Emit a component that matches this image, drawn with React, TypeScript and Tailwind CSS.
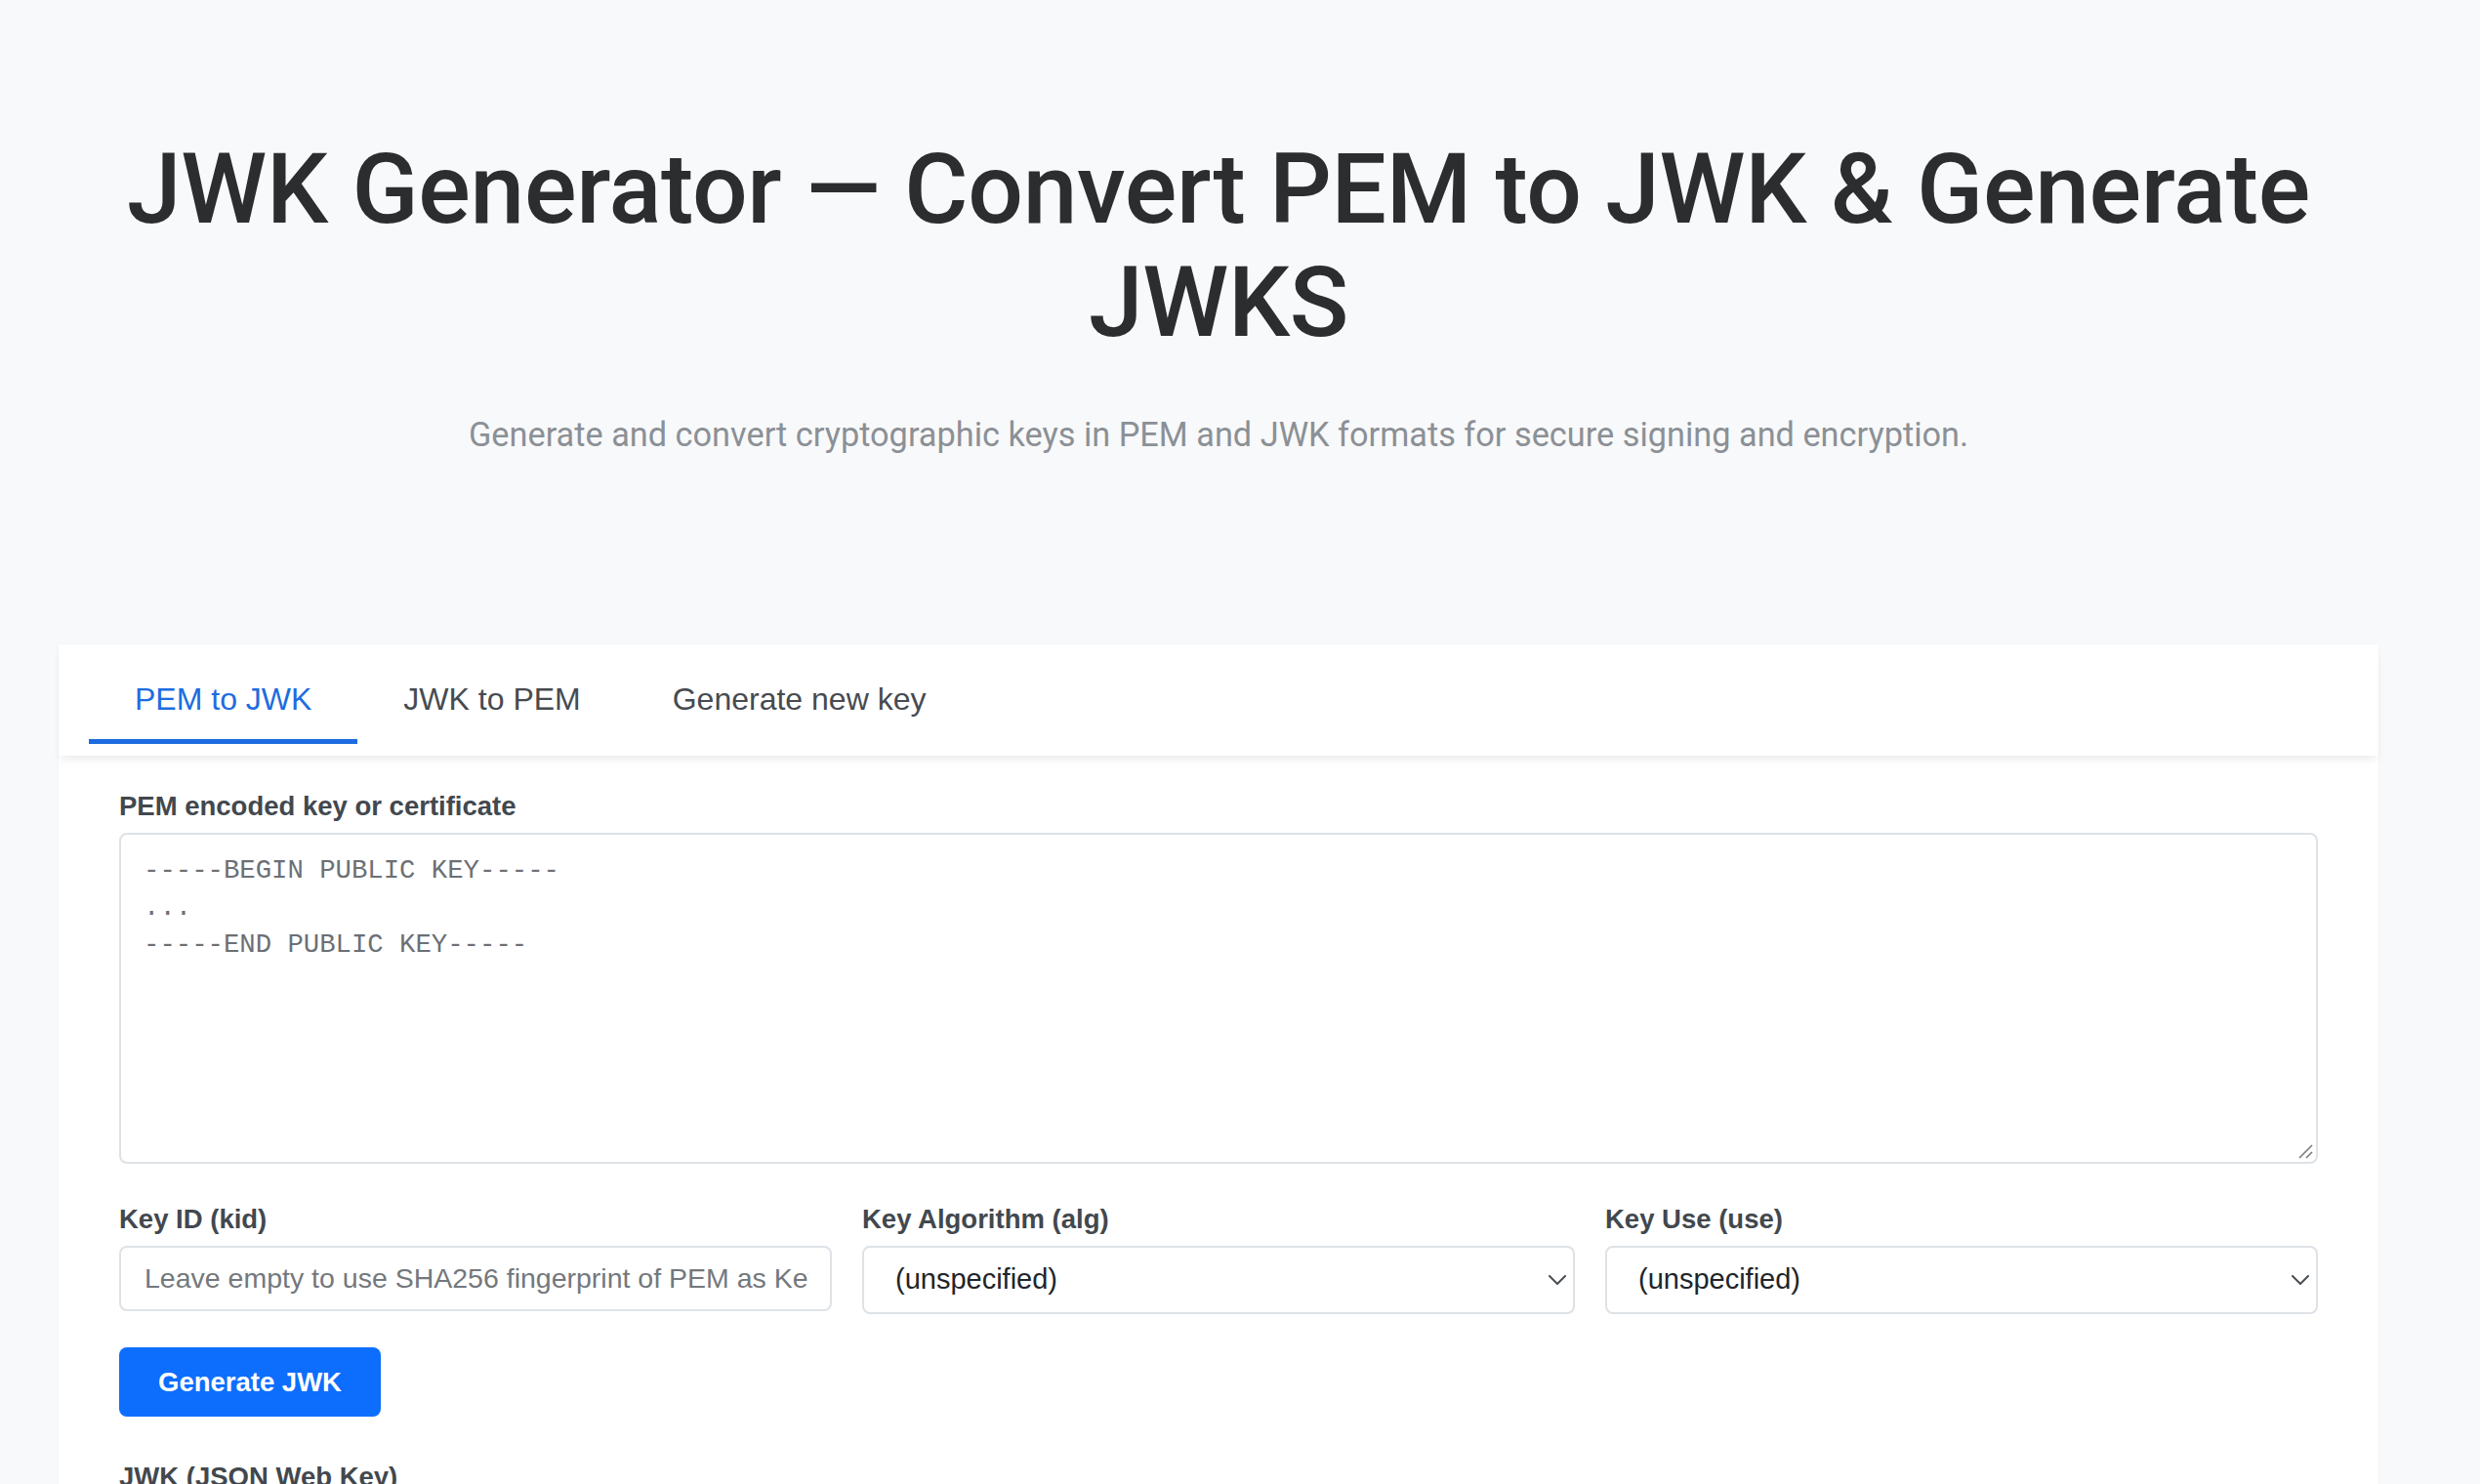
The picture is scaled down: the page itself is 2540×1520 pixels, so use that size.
import React from "react";

function Chevron() {
  return (
    <svg width="18" height="10" viewBox="0 0 18 10" fill="none" className="shrink-0">
      <path d="M1 1L9 9L17 1" stroke="#4a4f54" strokeWidth="2" strokeLinecap="round" strokeLinejoin="round" />
    </svg>
  );
}

function Label({ children }: { children: React.ReactNode }) {
  return (
    <div className="text-[27.5px] leading-[39px] font-bold text-[#42484e] mb-[8px]">{children}</div>
  );
}

function SelectBox({ value }: { value: string }) {
  return (
    <div className="h-[70px] w-full border-2 border-[#dee2e6] rounded-[8px] bg-white flex items-center pl-[32px] pr-[7px] justify-between">
      <span className="text-[29px] text-[#212529]">{value}</span>
      <Chevron />
    </div>
  );
}

export default function App() {
  return (
    <div className="min-h-screen w-full bg-[#f8f9fa] font-['Liberation_Sans',Arial,sans-serif]">
      <div className="w-[2496px] px-[60px]">
        <header className="pt-[136px] text-center font-[Roboto,sans-serif]">
          <h1 className="text-[100px] leading-[116px] tracking-[-0.3px] font-medium text-[#2b2d2f]">
            JWK Generator — Convert PEM to JWK &amp; Generate
            <br />
            JWKS
          </h1>
          <p className="mt-[53px] text-[34.3px] leading-[49px] text-[#8b9096]">
            Generate and convert cryptographic keys in PEM and JWK formats for secure signing and encryption.
          </p>
        </header>

        <section className="mt-[190px] bg-white shadow-[0_0_4px_rgba(0,0,0,0.03)]">
          <div className="relative z-10 h-[114px] px-[31px] pb-[12px] flex items-end bg-white shadow-[0_6px_10px_-3px_rgba(0,0,0,0.09)]">
            <div className="px-[47px] pb-[17px] border-b-[5px] border-[#1d6ce0] text-[32px] leading-[48px] text-[#1d6ce0]">
              PEM to JWK
            </div>
            <div className="px-[47px] pb-[17px] border-b-[5px] border-transparent text-[32px] leading-[48px] text-[#464b50]">
              JWK to PEM
            </div>
            <div className="px-[47px] pb-[17px] border-b-[5px] border-transparent text-[32px] leading-[48px] text-[#464b50]">
              Generate new key
            </div>
          </div>

          <div className="px-[62px] pt-[32px] pb-[80px]">
            <Label>PEM encoded key or certificate</Label>
            <div className="relative h-[339px] border-2 border-[#dee2e6] rounded-[8px] bg-white pl-[23px] pt-[18px] font-['Liberation_Mono',monospace] text-[27.3px] leading-[38px] text-[#6c7075] whitespace-pre">
              {"-----BEGIN PUBLIC KEY-----\n...\n-----END PUBLIC KEY-----"}
              <svg width="16" height="16" viewBox="0 0 16 16" className="absolute right-[3px] bottom-[3px]">
                <path d="M15 2L2 15" stroke="#7a7a7a" strokeWidth="1.6" />
                <path d="M15 9L9 15" stroke="#7a7a7a" strokeWidth="1.6" />
              </svg>
            </div>

            <div className="mt-[37px] grid grid-cols-3 gap-[31px] items-start">
              <div>
                <Label>Key ID (kid)</Label>
                <div className="h-[67px] border-2 border-[#dee2e6] rounded-[8px] bg-white flex items-center pl-[24px] pr-[22px] overflow-hidden">
                  <span className="text-[28.5px] text-[#74787c] whitespace-nowrap overflow-hidden">
                    Leave empty to use SHA256 fingerprint of PEM as Key ID
                  </span>
                </div>
              </div>
              <div>
                <Label>Key Algorithm (alg)</Label>
                <SelectBox value="(unspecified)" />
              </div>
              <div>
                <Label>Key Use (use)</Label>
                <SelectBox value="(unspecified)" />
              </div>
            </div>

            <button className="mt-[34px] h-[71px] w-[268px] rounded-[8px] bg-[#0d6efd] text-white text-[27.5px] font-bold flex items-center justify-center">
              Generate JWK
            </button>

            <div className="mt-[42px]">
              <Label>JWK (JSON Web Key)</Label>
              <div className="h-[339px] border-2 border-[#dee2e6] rounded-[8px] bg-white" />
            </div>
          </div>
        </section>
      </div>
    </div>
  );
}
